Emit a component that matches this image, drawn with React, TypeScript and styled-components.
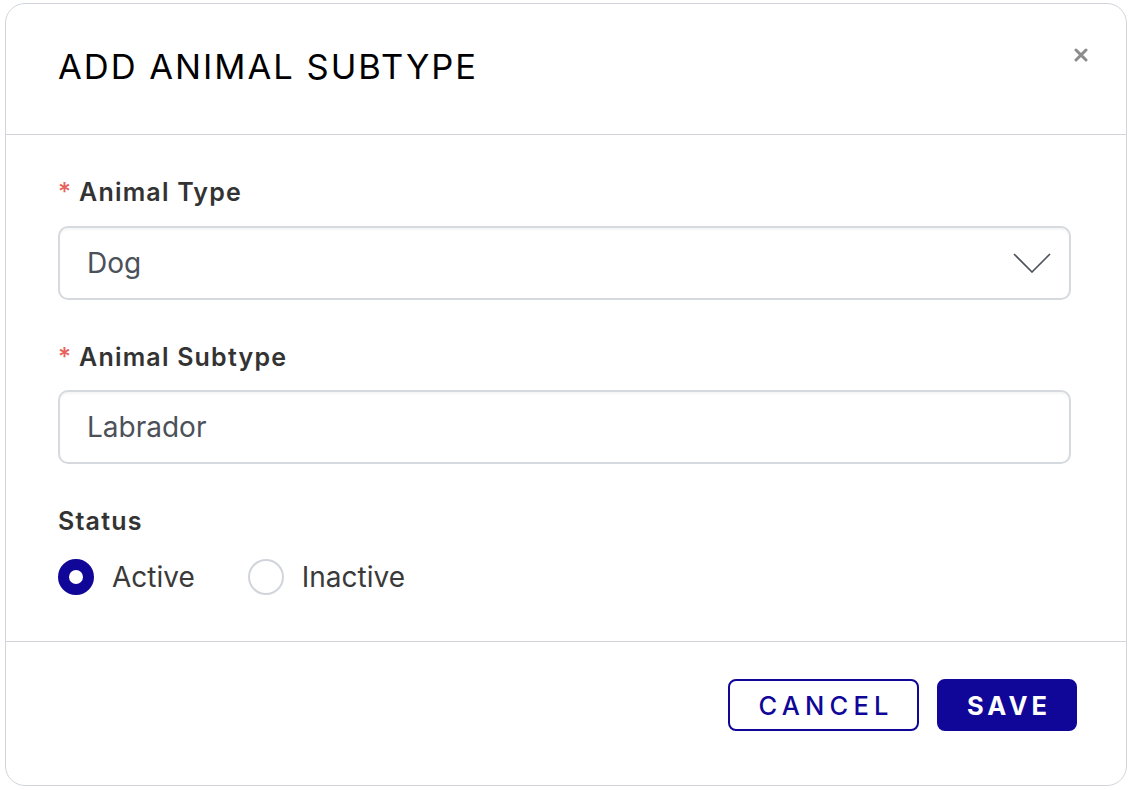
import React, { useState } from 'react';
import styled, { createGlobalStyle } from 'styled-components';

const GlobalStyle = createGlobalStyle`
    body {
        margin: 0;
        background: #ffffff;
        font-family: "Inter", "Liberation Sans", sans-serif;
    }
`;

const Page = styled.div`
    padding: 3px 2px 5px 5px;
`;

const Card = styled.div`
    box-sizing: border-box;
    width: 1122px;
    height: 783px;
    border: 1px solid #d1d5db;
    border-radius: 20px;
    background: #fff;
    display: flex;
    flex-direction: column;
`;

const Header = styled.div`
    position: relative;
    box-sizing: border-box;
    height: 131px;
    padding: 43px 52px 0;
    border-bottom: 1px solid #d1d5db;
`;

const Title = styled.h1`
    margin: 0;
    font-size: 34.5px;
    line-height: 40px;
    font-weight: 400;
    letter-spacing: 2px;
    color: #000;
`;

const CloseButton = styled.button`
    position: absolute;
    top: 44px;
    right: 38px;
    width: 14px;
    height: 14px;
    padding: 0;
    border: none;
    background: none;
    display: flex;
    cursor: pointer;
`;

const Body = styled.div`
    box-sizing: border-box;
    height: 507px;
    padding: 41px 52px 0;
    border-bottom: 1px solid #d1d5db;
    display: flex;
    flex-direction: column;
`;

const Label = styled.label<{ $gap: number }>`
    display: block;
    margin-top: ${(p) => p.$gap}px;
    font-size: 25px;
    line-height: 32px;
    font-weight: 600;
    letter-spacing: 1.2px;
    color: #333;
`;

const Required = styled.span`
    color: #e8615c;
    font-weight: 500;
    letter-spacing: 0;
    margin-right: 8px;
`;

const FieldBox = styled.div<{ $gap: number }>`
    box-sizing: border-box;
    margin-top: ${(p) => p.$gap}px;
    width: 1013px;
    height: 74px;
    border: 2px solid #d6d9de;
    border-radius: 10px;
    padding: 0 18px 0 27px;
    display: flex;
    align-items: center;
    justify-content: space-between;
    box-shadow: inset 0 2px 2px rgba(0, 0, 0, 0.04);
`;

const FieldText = styled.span`
    font-size: 28px;
    color: #4b5059;
`;

const RadioRow = styled.div`
    margin-top: 22px;
    display: flex;
    align-items: center;
    gap: 53px;
`;

const RadioOption = styled.label`
    display: flex;
    align-items: center;
    gap: 18px;
    cursor: pointer;
    font-size: 28px;
    color: #3a3a3a;
`;

const RadioDot = styled.span<{ $checked: boolean }>`
    box-sizing: border-box;
    width: 36px;
    height: 36px;
    border-radius: 50%;
    background: #fff;
    border: ${(p) => (p.$checked ? '11px solid #100698' : '2px solid #d1d5db')};
`;

const Footer = styled.div`
    flex: 1;
    display: flex;
    justify-content: flex-end;
    align-items: flex-start;
    gap: 18px;
    padding: 37px 49px 0 0;
`;

const Button = styled.button<{ $primary?: boolean }>`
    box-sizing: border-box;
    height: 52px;
    border-radius: 8px;
    border: 2px solid #100698;
    background: ${(p) => (p.$primary ? '#100698' : '#fff')};
    color: ${(p) => (p.$primary ? '#fff' : '#100698')};
    font-family: "Inter", "Liberation Sans", sans-serif;
    font-size: 25.5px;
    font-weight: ${(p) => (p.$primary ? 700 : 500)};
    letter-spacing: ${(p) => (p.$primary ? '4px' : '5.2px')};
    padding: 0 0 0 ${(p) => (p.$primary ? '4px' : '5px')};
    width: ${(p) => (p.$primary ? '140px' : '191px')};
    cursor: pointer;
`;

const App: React.FC = () => {
    const [status, setStatus] = useState('Active');

    return (
        <Page>
            <GlobalStyle />
            <Card>
                <Header>
                    <Title>ADD ANIMAL SUBTYPE</Title>
                    <CloseButton aria-label="close">
                        <svg width="14" height="14" viewBox="0 0 14 14">
                            <path d="M2 2 L12 12 M12 2 L2 12" stroke="#8c8c8c" strokeWidth="3" strokeLinecap="round" />
                        </svg>
                    </CloseButton>
                </Header>
                <Body>
                    <Label $gap={0}><Required>*</Required>Animal Type</Label>
                    <FieldBox $gap={18}>
                        <FieldText>Dog</FieldText>
                        <svg width="38" height="20" viewBox="0 0 38 20">
                            <path d="M1 1 L19 19 L37 1" fill="none" stroke="#4b5059" strokeWidth="1.6" />
                        </svg>
                    </FieldBox>
                    <Label $gap={41}><Required>*</Required>Animal Subtype</Label>
                    <FieldBox $gap={17}>
                        <FieldText>Labrador</FieldText>
                    </FieldBox>
                    <Label $gap={41}>Status</Label>
                    <RadioRow>
                        {['Active', 'Inactive'].map((s) => (
                            <RadioOption key={s} onClick={() => setStatus(s)}>
                                <RadioDot $checked={status === s} />
                                {s}
                            </RadioOption>
                        ))}
                    </RadioRow>
                </Body>
                <Footer>
                    <Button>CANCEL</Button>
                    <Button $primary>SAVE</Button>
                </Footer>
            </Card>
        </Page>
    );
};

export default App;
